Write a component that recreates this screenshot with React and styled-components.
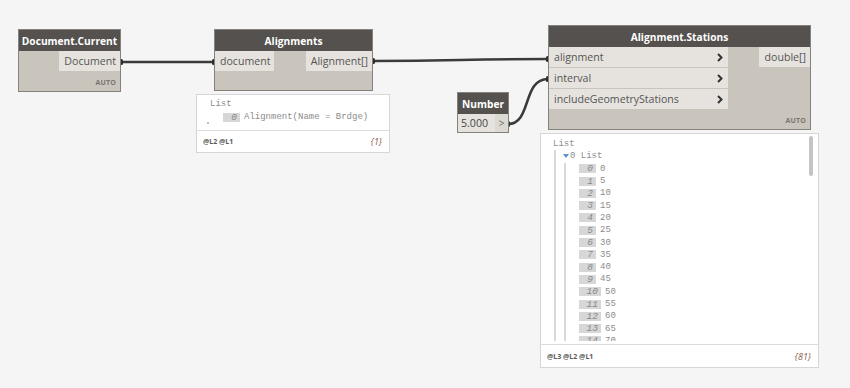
import React from "react";
import styled, { createGlobalStyle } from "styled-components";

const GlobalStyle = createGlobalStyle`
  html, body {
    margin: 0;
    padding: 0;
    background: #f5f5f5;
  }
  body {
    font-family: "Open Sans", "Liberation Sans", sans-serif;
  }
`;

const Canvas = styled.div`
  position: relative;
  width: 850px;
  height: 388px;
  overflow: hidden;
  background: #f5f5f5;
`;

const Wires = styled.svg`
  position: absolute;
  left: 0;
  top: 0;
  pointer-events: none;
`;

const Node = styled.div`
  position: absolute;
  left: ${(p) => p.$x}px;
  top: ${(p) => p.$y}px;
  width: ${(p) => p.$w}px;
  box-sizing: border-box;
  border: 1px solid #85817c;
  background: #c9c5bd;
  display: flex;
  flex-direction: column;
`;

const Header = styled.div`
  height: 21px;
  background: #54514e;
  color: #fff;
  font-size: 10.2px;
  font-weight: 700;
  display: flex;
  align-items: center;
  justify-content: center;
  white-space: nowrap;
`;

const Body = styled.div`
  display: flex;
  justify-content: space-between;
  align-items: flex-start;
`;

const Ports = styled.div`
  display: flex;
  flex-direction: column;
  gap: 1px;
`;

const Port = styled.div`
  height: ${(p) => p.$h || 20}px;
  width: ${(p) => p.$w}px;
  box-sizing: border-box;
  background: #e6e3de;
  color: #555;
  font-size: 10.6px;
  padding: 0 ${(p) => (p.$out ? 4 : 5)}px 0 5px;
  display: flex;
  align-items: center;
  justify-content: ${(p) => (p.$out ? "flex-end" : "space-between")};
  white-space: nowrap;
`;

const Button = styled.div`
  width: 13px;
  height: 18px;
  background: #dcd8d2;
  color: #666;
  font-size: 10px;
  display: flex;
  align-items: center;
  justify-content: center;
`;

const Foot = styled.div`
  height: ${(p) => p.$h}px;
  display: flex;
  align-items: flex-end;
  justify-content: flex-end;
  padding: 0 4px 4px 0;
  box-sizing: border-box;
  font-size: 7px;
  font-weight: 700;
  color: #7a7672;
  letter-spacing: 0.2px;
`;

const Watch = styled.div`
  position: absolute;
  left: ${(p) => p.$x}px;
  top: ${(p) => p.$y}px;
  width: ${(p) => p.$w}px;
  box-sizing: border-box;
  border: 1px solid #d6d6d6;
  background: #fff;
  display: flex;
  flex-direction: column;
`;

const Preview = styled.div`
  position: relative;
  height: ${(p) => p.$h}px;
  overflow: hidden;
  padding: ${(p) => p.$pt}px 0 0 ${(p) => p.$pl}px;
  box-sizing: border-box;
  font-family: "Liberation Mono", "DejaVu Sans Mono", monospace;
  font-size: 9px;
  color: #8c8c8c;
`;

const Line = styled.div`
  height: ${(p) => p.$lh || 12.3}px;
  display: flex;
  align-items: center;
  white-space: nowrap;
`;

const Branch = styled.div`
  margin-left: ${(p) => p.$ml}px;
  padding-left: ${(p) => p.$pl}px;
  border-left: 2px solid #d9d9d9;
  padding-bottom: 40px;
`;

const Caret = styled.span`
  width: 0;
  height: 0;
  border-left: 3px solid transparent;
  border-right: 3px solid transparent;
  border-top: 4px solid #5b8fc7;
  margin-right: 1px;
`;

const Index = styled.span`
  min-width: ${(p) => (p.$wide ? 22 : 17)}px;
  height: 9px;
  box-sizing: border-box;
  padding-right: 3px;
  background: #d7d7d7;
  color: #888;
  font-size: 9.5px;
  font-style: italic;
  display: inline-flex;
  align-items: center;
  justify-content: flex-end;
  margin-right: 4px;
`;

const Dot = styled.span`
  position: absolute;
  left: 10px;
  top: 27px;
  width: 2px;
  height: 2px;
  border-radius: 1px;
  background: #aaa;
`;

const Scroll = styled.div`
  position: absolute;
  right: 5px;
  top: 2px;
  width: 4px;
  height: 40px;
  border-radius: 2px;
  background: #c4c4c4;
`;

const Footer = styled.div`
  height: ${(p) => p.$h}px;
  margin-top: ${(p) => p.$gap || 0}px;
  border-top: 1px solid #dcdcdc;
  display: flex;
  align-items: center;
  justify-content: space-between;
  padding: 0 7px 0 6px;
`;

const Levels = styled.span`
  font-size: 7px;
  font-weight: 700;
  color: #5c5c5c;
`;

const Count = styled.span`
  font-size: 9px;
  font-style: italic;
  color: #8e5e4e;
`;

const Chevron = () => (
  <svg width="6" height="9" viewBox="0 0 6 9">
    <path d="M1 1 L4.5 4.5 L1 8" fill="none" stroke="#333" strokeWidth="2" />
  </svg>
);

const values = Array.from({ length: 15 }, (_, i) => i * 5);

export default function App() {
  return (
    <Canvas>
      <GlobalStyle />
      <Wires width="850" height="388">
        <g fill="none" stroke="#3b3b3b" strokeWidth="2.6">
          <path d="M121 62 L214 62" />
          <path d="M373 61 C460 61 460 59 548 59" />
          <path d="M508 124 C532 124 522 79 548 79" />
        </g>
        <g fill="#2e2e2e">
          <rect x="119" y="59" width="4" height="6" rx="1.5" />
          <rect x="212" y="59" width="4" height="6" rx="1.5" />
          <rect x="371" y="58" width="4" height="6" rx="1.5" />
          <rect x="546" y="56" width="4" height="6" rx="1.5" />
          <rect x="506" y="121" width="4" height="6" rx="1.5" />
          <rect x="546" y="76" width="4" height="6" rx="1.5" />
        </g>
      </Wires>

      <Node $x={18} $y={29} $w={103}>
        <Header>Document.Current</Header>
        <Body>
          <span />
          <Port $w={61} $out>Document</Port>
        </Body>
        <Foot $h={20}>AUTO</Foot>
      </Node>

      <Node $x={214} $y={29} $w={159}>
        <Header>Alignments</Header>
        <Body>
          <Port $w={59}>document</Port>
          <Port $w={66} $out>Alignment[]</Port>
        </Body>
        <Foot $h={19} />
      </Node>

      <Watch $x={196} $y={94} $w={194}>
        <Preview $h={35} $pt={3} $pl={13}>
          <Line $lh={12}>List</Line>
          <Line $lh={14}>
            <span style={{ width: 13 }} />
            <Index>0</Index>
            Alignment(Name = Brdge)
          </Line>
          <Dot />
        </Preview>
        <Footer $h={21}>
          <Levels>@L2 @L1</Levels>
          <Count>{"{1}"}</Count>
        </Footer>
      </Watch>

      <Node $x={457} $y={92} $w={52}>
        <Header>Number</Header>
        <Body>
          <Port $w={37} $h={18}>
            <span style={{ color: "#444", marginLeft: -2 }}>5.000</span>
          </Port>
          <Button>&gt;</Button>
        </Body>
      </Node>

      <Node $x={548} $y={25} $w={263}>
        <Header>Alignment.Stations</Header>
        <Body>
          <Ports>
            <Port $w={179}>
              alignment
              <Chevron />
            </Port>
            <Port $w={179}>
              interval
              <Chevron />
            </Port>
            <Port $w={179}>
              includeGeometryStations
              <Chevron />
            </Port>
          </Ports>
          <Port $w={51} $out>double[]</Port>
        </Body>
        <Foot $h={20}>AUTO</Foot>
      </Node>

      <Watch $x={540} $y={133} $w={279}>
        <Preview $h={207} $pt={4} $pl={12}>
          <Line>List</Line>
          <Branch $ml={1} $pl={7}>
            <Line>
              <Caret />0 List
            </Line>
            <Branch $ml={1} $pl={13}>
              {values.map((v, i) => (
                <Line key={i}>
                  <Index $wide={i > 9}>{i}</Index>
                  {v}
                </Line>
              ))}
            </Branch>
          </Branch>
          <Scroll />
        </Preview>
        <Footer $h={22} $gap={3}>
          <Levels>@L3 @L2 @L1</Levels>
          <Count>{"{81}"}</Count>
        </Footer>
      </Watch>
    </Canvas>
  );
}
